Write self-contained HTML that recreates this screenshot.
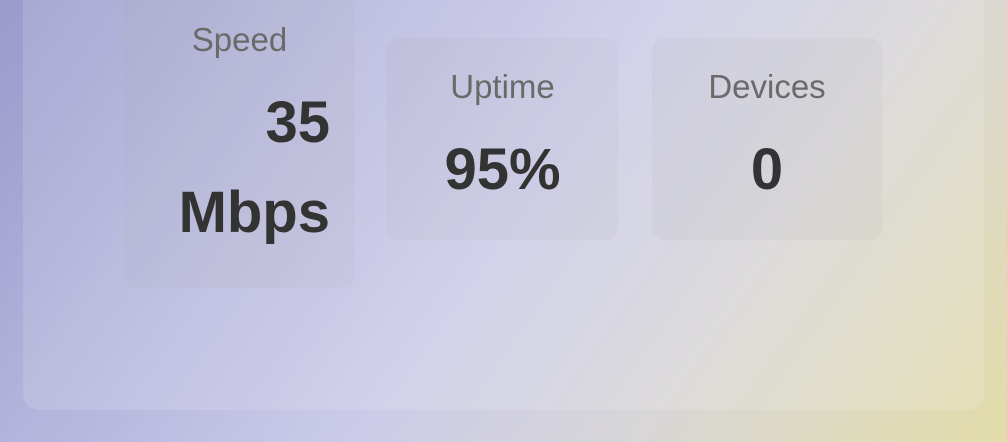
<!DOCTYPE html>
<html><head><style>
html,body{margin:0;padding:0;}
body{width:1007px;height:442px;overflow:hidden;position:relative;font-family:"Liberation Sans",Roboto,sans-serif;
background:linear-gradient(125deg,#9a9acc 0%,#b4b4dc 25%,#cbcbe9 50%,#d8d6d6 72%,#e2dca8 100%);}
.card{position:absolute;left:23px;top:-40px;width:961px;height:450px;border-radius:16px;background:rgba(255,255,255,0.13);}
.box{position:absolute;width:231px;border-radius:12px;background:rgba(170,170,170,0.1);padding:25px 0;text-align:center;box-sizing:border-box;}
.l{font-size:33px;line-height:48px;color:#6a6a6a;}
.v{font-size:58px;line-height:90px;font-weight:bold;color:#333;margin-top:14px;}
</style></head><body>
<div class="card"></div>
<div class="box" style="left:124px;top:-9px;height:297px;"><div class="l">Speed</div><div class="v" style="text-align:right;padding-right:25px;">35<br>Mbps</div></div>
<div class="box" style="left:387px;top:38px;height:202px;"><div class="l">Uptime</div><div class="v">95%</div></div>
<div class="box" style="left:652px;top:38px;height:202px;width:230px;"><div class="l">Devices</div><div class="v">0</div></div>
</body></html>
